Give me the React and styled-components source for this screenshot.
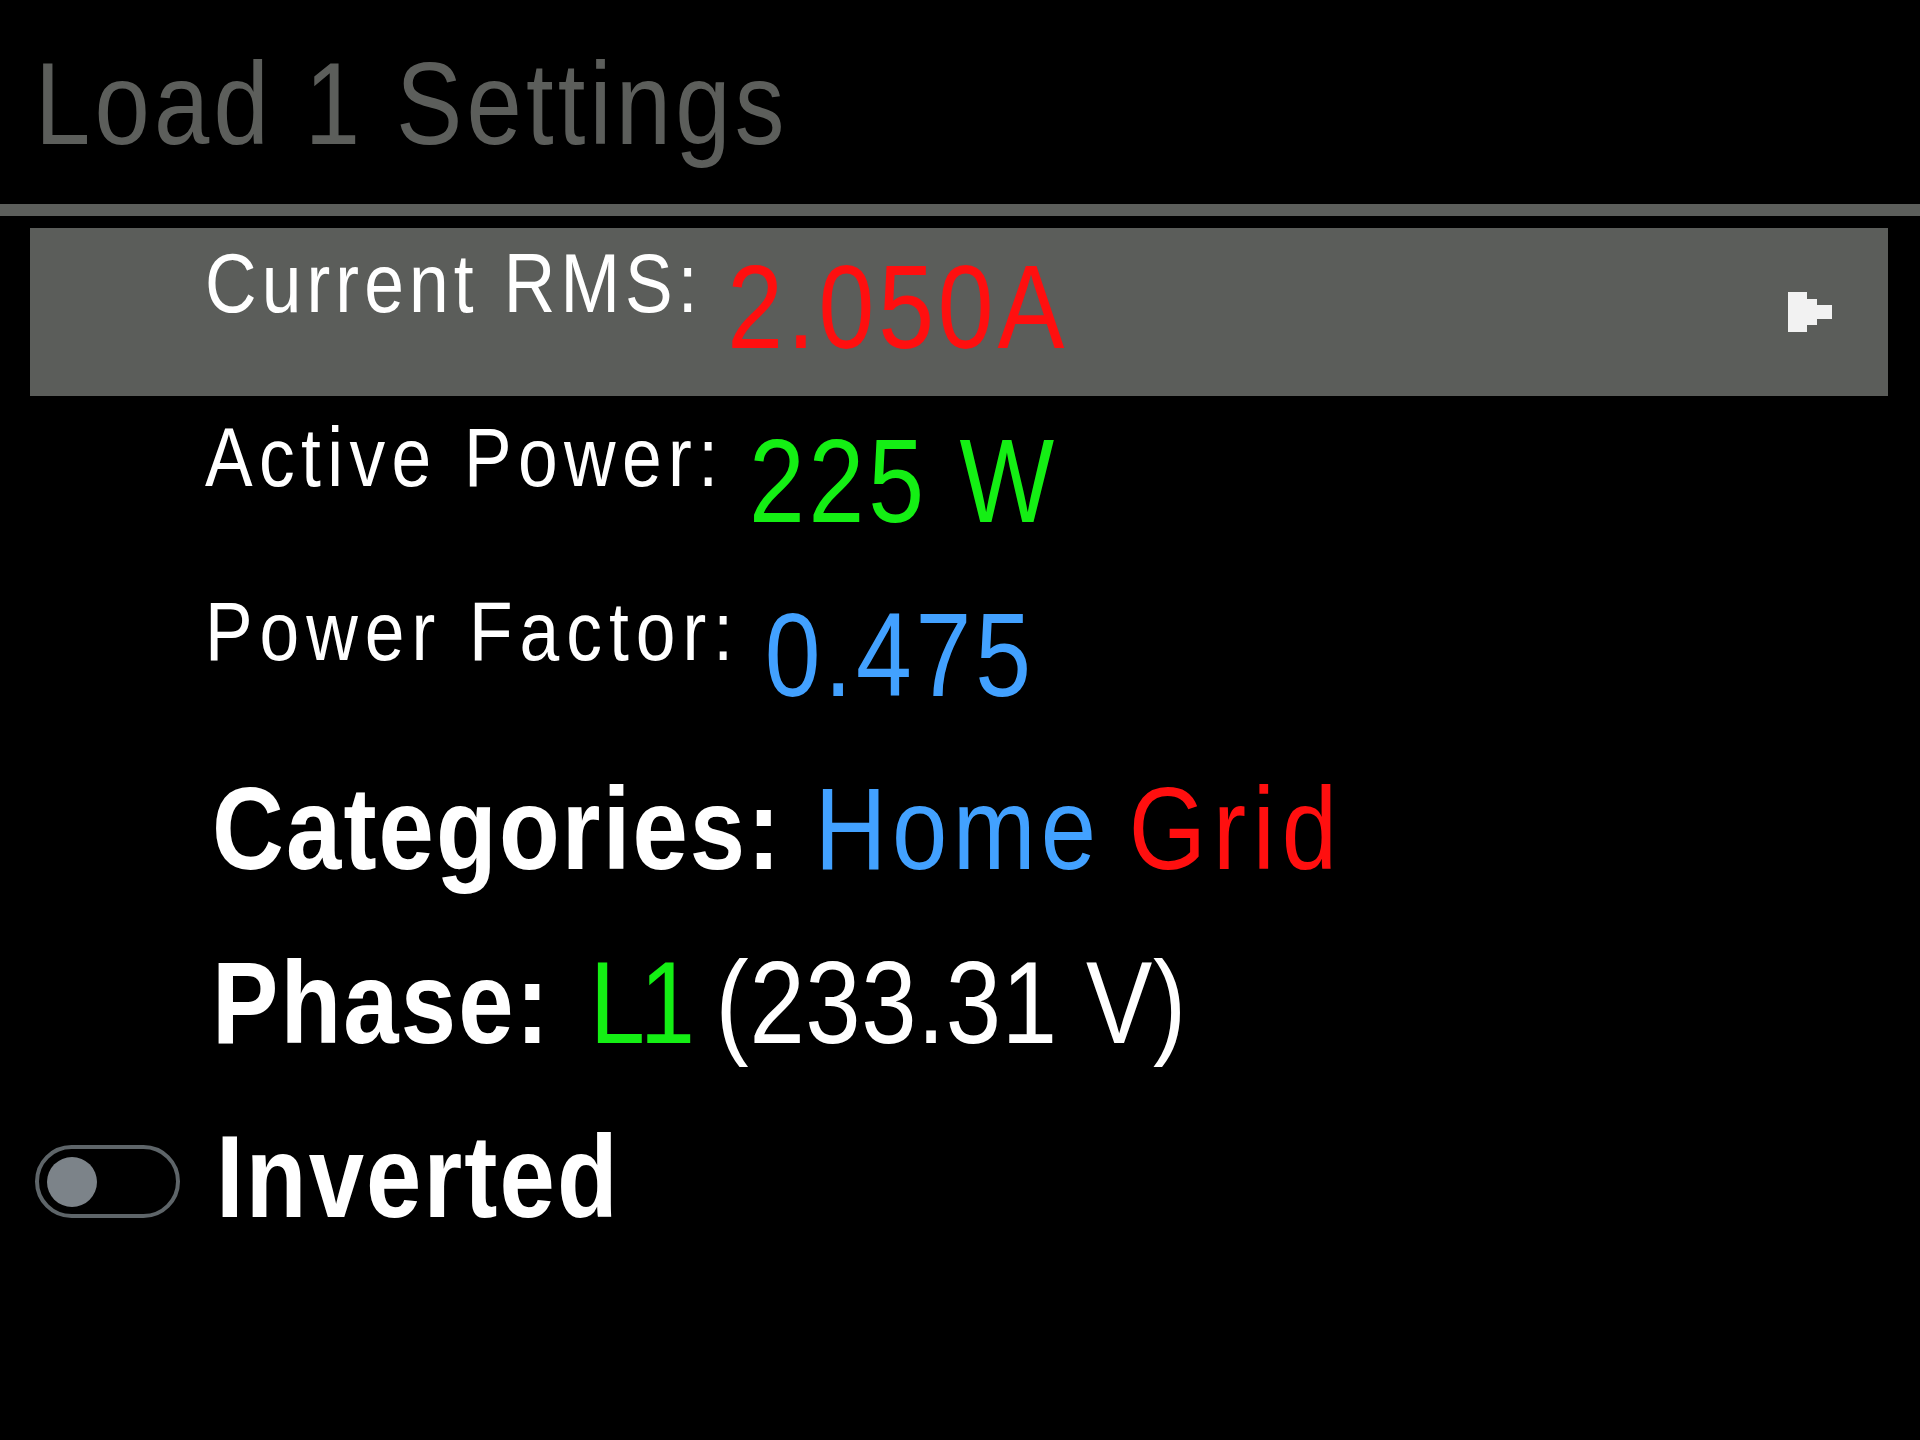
import React from 'react';
import styled, { createGlobalStyle } from 'styled-components';

const GlobalStyle = createGlobalStyle`
  html, body {
    margin: 0;
    padding: 0;
    background: #000;
  }

  body {
    font-family: "Liberation Sans", Arial, sans-serif;
  }
`;

// the panel font is a narrow pixel face, so glyphs get squeezed horizontally
const NARROW = 'scaleX(0.85)';

const Screen = styled.div`
  width: 1920px;
  height: 1440px;
  background: #000;
  overflow: hidden;
`;

const Title = styled.h1`
  margin: 0;
  box-sizing: border-box;
  height: 204px;
  padding: 45px 0 0 35px;
  font-size: 117px;
  line-height: 117px;
  font-weight: 400;
  color: #5c5e5b;
  white-space: nowrap;

  span {
    display: inline-block;
    letter-spacing: 4.9px;
    transform: ${NARROW};
    transform-origin: 0 50%;
  }
`;

const Divider = styled.div`
  height: 12px;
  background: #5c5e5b;
`;

const List = styled.div`
  display: flex;
  flex-direction: column;
  gap: 6px;
  margin: 12px 32px 0 30px;
`;

const ValueRow = styled.div`
  display: flex;
  align-items: flex-start;
  box-sizing: border-box;
  height: 168px;
  padding: 0 56px 0 175px;
  background: ${({ $selected }) => ($selected ? '#5b5d5a' : 'transparent')};
`;

const ReadingGroup = styled.div`
  display: flex;
  align-items: flex-start;
  transform: ${NARROW};
  transform-origin: 0 0;
  white-space: pre;
`;

const Label = styled.span`
  margin-top: 13px;
  font-size: 84px;
  line-height: 84px;
  color: #fff;
  letter-spacing: ${({ $ls = 7 }) => $ls}px;
`;

const Reading = styled.span`
  margin: 20px 0 0 29px;
  font-size: 118px;
  line-height: 118px;
  color: ${({ $color }) => $color};
  letter-spacing: 4.5px;
`;

const Arrow = styled.svg`
  margin-left: auto;
  align-self: center;
  flex-shrink: 0;
`;

const BigList = styled.div`
  display: flex;
  flex-direction: column;
  margin-top: -2px;
`;

const BigLine = styled.div`
  display: flex;
  align-items: flex-start;
  height: 174px;
  padding-left: ${({ $indent = 212 }) => $indent}px;
`;

const LineText = styled.span`
  display: block;
  font-size: 117px;
  line-height: 174px;
  color: #fff;
  letter-spacing: 2.5px;
  white-space: pre;
  transform: ${NARROW};
  transform-origin: 0 50%;
`;

const Key = styled.span`
  font-weight: 700;
  letter-spacing: 2.5px;
`;

const Val = styled.span`
  margin-left: ${({ $gap = 3 }) => $gap}px;
  color: ${({ $color = '#fff' }) => $color};
  letter-spacing: ${({ $ls = 1 }) => $ls}px;
`;

const Toggle = styled.div`
  flex-shrink: 0;
  display: flex;
  align-items: center;
  box-sizing: border-box;
  width: 145px;
  height: 73px;
  margin: 55px 36px 0 0;
  padding-left: 8px;
  border: 4px solid #5e6569;
  border-radius: 37px;
`;

const Knob = styled.div`
  width: 50px;
  height: 50px;
  border-radius: 50%;
  background: #7c8389;
`;

const RED = '#ff0f0f';
const GREEN = '#14ef14';
const BLUE = '#42a1ff';

const readings = [
  { label: 'Current RMS:', value: '2.050A', color: RED, ls: 6, selected: true },
  { label: 'Active Power:', value: '225 W', color: GREEN, ls: 7.5 },
  { label: 'Power Factor:', value: '0.475', color: BLUE, ls: 8.2 },
];

const StepArrow = () => (
  <Arrow width="44" height="40" viewBox="0 0 44 40" shapeRendering="crispEdges">
    <polygon
      points="0,0 19,0 19,7 29,7 29,13 44,13 44,27 29,27 29,33 19,33 19,40 0,40"
      fill="#f2f2f2"
    />
  </Arrow>
);

export default function App() {
  return (
    <Screen>
      <GlobalStyle />
      <Title>
        <span>Load 1 Settings</span>
      </Title>
      <Divider />
      <List>
        {readings.map((r) => (
          <ValueRow key={r.label} $selected={r.selected}>
            <ReadingGroup>
              <Label $ls={r.ls}>{r.label}</Label>
              <Reading $color={r.color}>{r.value}</Reading>
            </ReadingGroup>
            {r.selected && <StepArrow />}
          </ValueRow>
        ))}
      </List>
      <BigList>
        <BigLine>
          <LineText>
            <Key>Categories:</Key>{' '}
            <Val $color={BLUE} $ls={6.3}>Home</Val>{' '}
            <Val $color={RED} $ls={8} $gap={-3}>Grid</Val>
          </LineText>
        </BigLine>
        <BigLine>
          <LineText>
            <Key>Phase:</Key>{' '}
            <Val $color={GREEN} $ls={-6} $gap={10.6}>L1</Val>{' '}
            <Val $gap={-5} $ls={0.8}>(233.31 V)</Val>
          </LineText>
        </BigLine>
        <BigLine $indent={35}>
          <Toggle>
            <Knob />
          </Toggle>
          <LineText>
            <Key>Inverted</Key>
          </LineText>
        </BigLine>
      </BigList>
    </Screen>
  );
}
